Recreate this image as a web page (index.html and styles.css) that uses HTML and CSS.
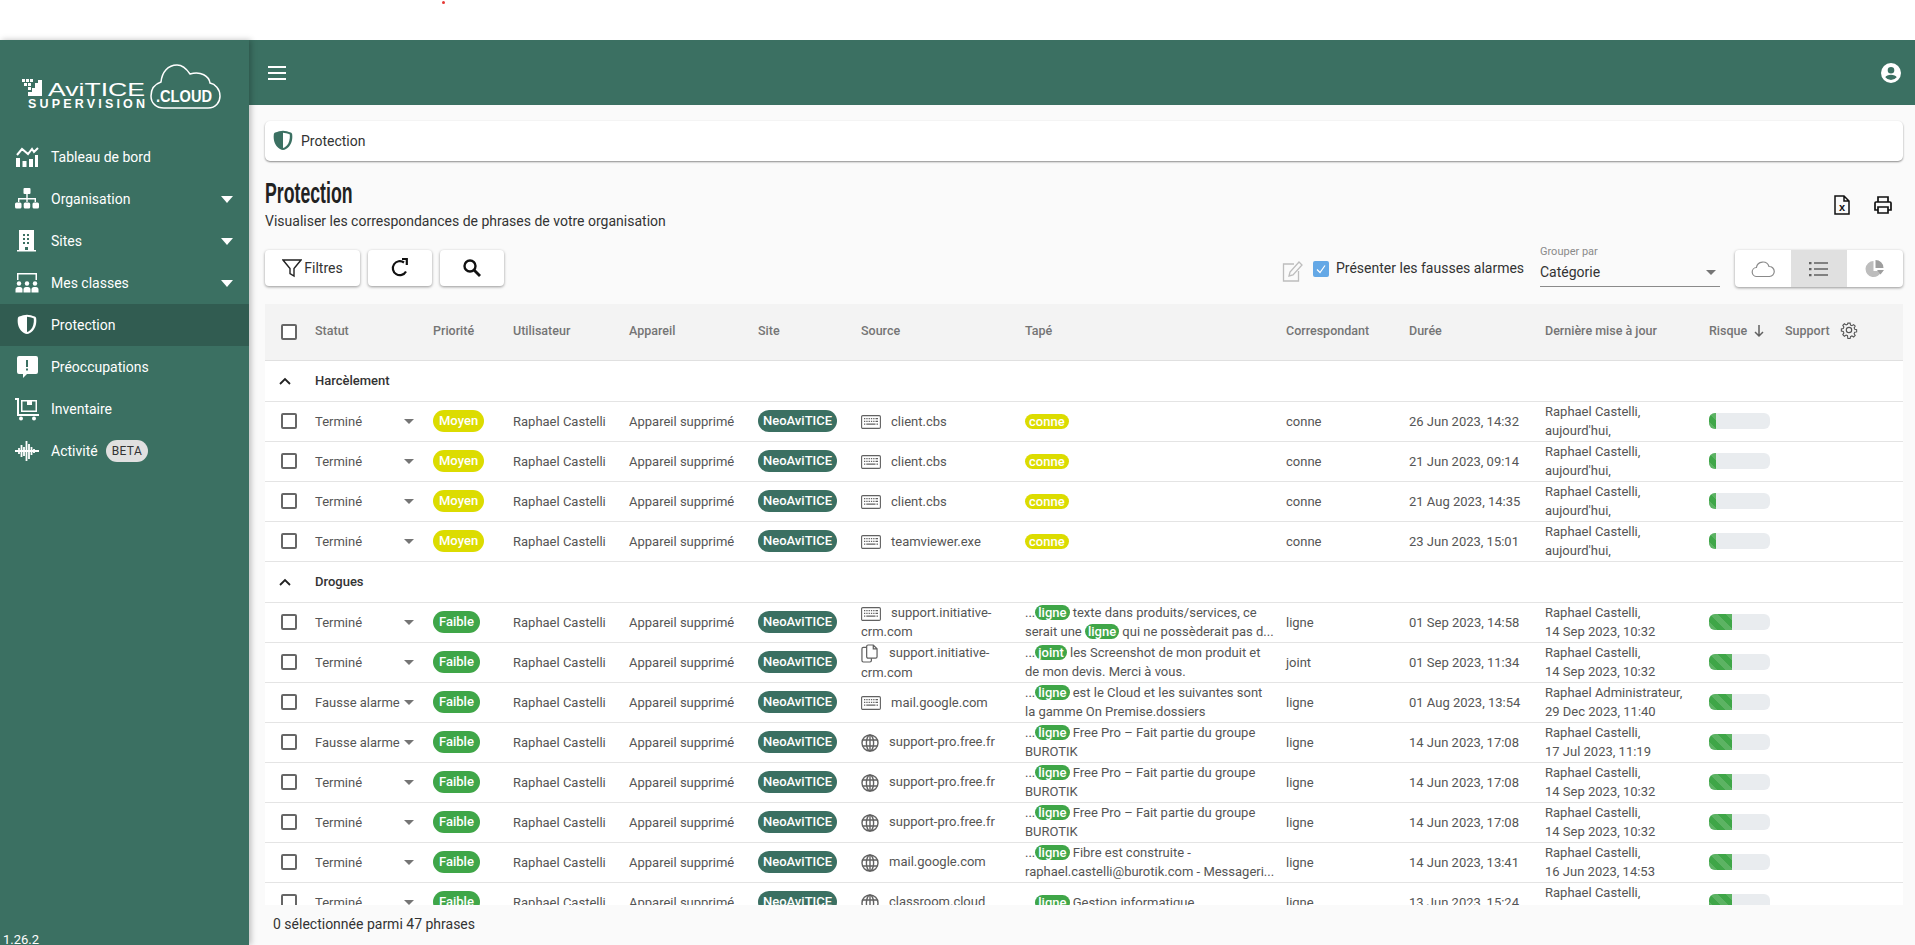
FILE: index.html
```html
<!DOCTYPE html>
<html lang="fr">
<head>
    <meta charset="UTF-8">
    <meta name="viewport" content="width=device-width, initial-scale=1.0">
    <title>Protection</title>
    <link rel="stylesheet" href="styles.css">
</head>
<body>
    <svg class="defs" aria-hidden="true">
        <symbol id="i-shield" viewBox="0 0 24 24"><path d="M12 1C9.5 1 5.200 2.200 2.700 3.100 1.700 3.400 1.100 4.200 1 5.100 0.100 12 2.300 17.100 5 20.200c2 2.300 4.800 3.800 7 3.800s5-1.500 7-3.800c2.700-3.100 4.900-8.200 4-15.100-.1-.9-.7-1.700-1.700-2C18.800 2.200 14.500 1 12 1zm0 2.400c2 0 5.700 1 8.200 1.900.4 5.900-1.100 10.300-3.300 13.100-1.700 2-3.800 3.200-4.900 3.200z" fill-rule="evenodd"/></symbol>
        <symbol id="i-keyboard" viewBox="0 0 20 14"><rect x=".6" y=".6" width="18.800" height="12.800" rx="1.200" fill="none" stroke="currentColor" stroke-width="1.100"/><path d="M3 3h1.300v1.300H3zM5.300 3h1.300v1.300H5.300zM7.600 3h1.300v1.300H7.600zM9.900 3h1.300v1.300H9.900zM12.200 3h1.300v1.300h-1.300zM14.500 3h2.500v1.300h-2.500zM3 5.700h1.300V7H3zM5.300 5.700h1.300V7H5.300zM7.600 5.700h1.300V7H7.600zM9.900 5.700h1.300V7H9.900zM12.200 5.700h1.300V7h-1.300zM14.500 5.700h2.500V7h-2.500zM3 8.400h1.300v1.300H3zM5.300 8.400h9.200v1.300H5.300zM15.500 8.400H17v1.300h-1.500z"/></symbol>
        <symbol id="i-globe" viewBox="0 0 18 18"><g fill="none" stroke="currentColor" stroke-width="1.400"><circle cx="9" cy="9" r="8"/><ellipse cx="9" cy="9" rx="3.600" ry="8"/><path d="M1.500 6h15M1.500 12h15M9 1v16"/></g></symbol>
        <symbol id="i-copy" viewBox="0 0 18 20"><g fill="none" stroke="currentColor" stroke-width="1.300"><path d="M6 3.500H2.500A1.500 1.500 0 0 0 1 5v12.500A1.500 1.500 0 0 0 2.500 19h7a1.500 1.500 0 0 0 1.500-1.500V15"/><path d="M7.500 1H13l4 4v8.500a1.500 1.500 0 0 1-1.500 1.500h-8A1.500 1.500 0 0 1 6 13.500v-11A1.500 1.500 0 0 1 7.500 1zM13 1v4h4"/></g></symbol>
        <symbol id="i-chevron" viewBox="0 0 12 8"><path d="M1 7l5-5 5 5" fill="none" stroke="currentColor" stroke-width="1.800"/></symbol>
    </svg>

    <span class="red-dot"></span>

    <div class="app">
        <aside class="sidebar">
            <div class="logo">
                <svg width="204" height="50" viewBox="0 0 204 50">
                    <path d="M4 16h3v3H4zM8 16h3v3H8zM12 16h3v3h-3zM6 20h3v3H6zM10 20h3v3h-3zM10 24h3v3h-3zM14 25h3v-5h3v-3h4v16H10v-4h4z" fill="#fff"/>
                    <text x="30" y="33" class="logo-name" textLength="97" lengthAdjust="spacingAndGlyphs">AviTICE</text>
                    <text x="10" y="45" class="logo-sub" textLength="117">SUPERVISION</text>
                    <path d="M146 45H190C198 45 202 39 202 33C202 26 197 21 192 20C191 13 183 8 172 11C168 5 164 2 159 2C150 2 144 9 143 19C137 21 133 26 133 33C133 40 138 45 146 45Z" fill="none" stroke="#fff" stroke-width="1.500"/>
                    <text x="138" y="39" class="logo-cloud" textLength="56" lengthAdjust="spacingAndGlyphs">.CLOUD</text>
                </svg>
            </div>
            <nav class="nav">
                <a class="nav-item">
                    <svg class="nav-icon" viewBox="0 0 24 24"><path d="M1 13h4v9H1zM7.500 16h4v6h-4zM14 14h4v8h-4zM20 10h3v12h-3z"/><path d="M2 10l5-6 6 5 4-5 2 3 4-4" fill="none" stroke="#fff" stroke-width="2"/></svg>
                    <span>Tableau de bord</span>
                </a>
                <a class="nav-item">
                    <svg class="nav-icon" viewBox="0 0 24 24"><rect x="8.500" y="1" width="7" height="6" rx="1"/><path d="M11.300 7h1.400v4H21v4h-1.400v-2.600h-6.900V15h-1.400v-2.600H4.400V15H3v-4h8.300z"/><rect x="0" y="15.500" width="6.500" height="6" rx="1.500"/><rect x="8.700" y="15.500" width="6.500" height="6" rx="1.500"/><rect x="17.500" y="15.500" width="6.500" height="6" rx="1.500"/></svg>
                    <span>Organisation</span>
                    <i class="caret"></i>
                </a>
                <a class="nav-item">
                    <svg class="nav-icon" viewBox="0 0 24 24"><path d="M4 1h15v20h2v1.500H2V21h2zm4 4v2h2V5zm4 0v2h2V5zM8 9v2h2V9zm4 0v2h2V9zm-4 4v2h2v-2zm4 0v2h2v-2zm-2 5v3h3v-3z" fill-rule="evenodd"/></svg>
                    <span>Sites</span>
                    <i class="caret"></i>
                </a>
                <a class="nav-item">
                    <svg class="nav-icon" viewBox="0 0 24 24"><path d="M2 2h20v7h-1.500V3.500h-17V9H2z"/><circle cx="4" cy="12.500" r="2.200"/><circle cx="12" cy="12.500" r="2.200"/><circle cx="20" cy="12.500" r="2.200"/><path d="M.5 21.500v-3c0-1.500 1-2.500 2.500-2.500h2c1.500 0 2.500 1 2.500 2.500v3zM8.500 21.500v-3c0-1.500 1-2.500 2.500-2.500h2c1.500 0 2.500 1 2.500 2.500v3zM16.500 21.500v-3c0-1.500 1-2.500 2.500-2.500h2c1.500 0 2.500 1 2.500 2.500v3z"/></svg>
                    <span>Mes classes</span>
                    <i class="caret"></i>
                </a>
                <a class="nav-item active">
                    <svg class="nav-icon nav-shield"><use href="#i-shield"/></svg>
                    <span>Protection</span>
                </a>
                <a class="nav-item">
                    <svg class="nav-icon" viewBox="0 0 24 24"><path d="M4 1h17a2 2 0 0 1 2 2v14a2 2 0 0 1-2 2h-9l-4 4v-4H4a2 2 0 0 1-2-2V3a2 2 0 0 1 2-2zm7 4v7h2V5zm0 8.500v2h2v-2z" fill-rule="evenodd"/></svg>
                    <span>Préoccupations</span>
                </a>
                <a class="nav-item">
                    <svg class="nav-icon" viewBox="0 0 24 24"><path d="M0 1h4v16h20v2H2V3H0z"/><path d="M6 3h16v12H6zm1.500 1.500v9h13v-9H17v3.500h-5V4.500z" fill-rule="evenodd"/><circle cx="6" cy="21.500" r="2"/><circle cx="19" cy="21.500" r="2"/></svg>
                    <span>Inventaire</span>
                </a>
                <a class="nav-item">
                    <svg class="nav-icon" viewBox="0 0 24 24"><path d="M0 12h24M4 9v6M6.500 6v12M9 8v9M11.500 2v20M14 5v15M16.500 8v8M19 10v4" fill="none" stroke="#fff" stroke-width="1.800"/></svg>
                    <span>Activité</span>
                    <b class="beta">BETA</b>
                </a>
            </nav>
            <div class="version">1.26.2</div>
        </aside>

        <main class="main">
            <header class="topbar">
                <div class="burger"><span></span><span></span><span></span></div>
                <svg class="user-icon" viewBox="0 0 20 20"><path d="M10 0a10 10 0 1 0 0 20 10 10 0 0 0 0-20zm0 4a3.300 3.300 0 1 1 0 6.600A3.300 3.300 0 0 1 10 4zm0 7.800c2.500 0 5.300 1 5.700 2.500a7.300 7.300 0 0 1-11.400 0c.4-1.500 3.200-2.500 5.700-2.500z" fill="#fff" fill-rule="evenodd"/></svg>
            </header>

            <div class="content">
                <div class="breadcrumb">
                    <svg class="crumb-icon"><use href="#i-shield"/></svg>
                    <span>Protection</span>
                </div>

                <div class="page-head">
                    <div>
                        <h1>Protection</h1>
                        <p>Visualiser les correspondances de phrases de votre organisation</p>
                    </div>
                    <div class="page-actions">
                        <svg viewBox="0 0 16 20" width="16" height="20"><path d="M1 1h9l5 5v13H1zM10 1v5h5" fill="none" stroke="#111" stroke-width="1.500"/><text x="8" y="16" class="xls-x">x</text></svg>
                        <svg viewBox="0 0 20 20" width="20" height="20"><path d="M5 7V2h10v5M5 15H2V8a1 1 0 0 1 1-1h14a1 1 0 0 1 1 1v7h-3M5 12h10v6H5z" fill="none" stroke="#111" stroke-width="1.700"/></svg>
                    </div>
                </div>

                <div class="toolbar">
                    <div class="tool-left">
                        <button class="btn">
                            <svg viewBox="0 0 20 20" width="20" height="20"><path d="M1 2h18l-7 8.500V18l-4-2.500v-5z" fill="none" stroke="#222" stroke-width="1.400"/></svg>
                            Filtres
                        </button>
                        <button class="btn btn-icon">
                            <svg viewBox="0 0 20 20" width="20" height="20"><path d="M16 13.500A7 7 0 1 1 14 4.500" fill="none" stroke="#111" stroke-width="2.200"/><path d="M12 1h4.800v6" fill="none" stroke="#111" stroke-width="2.200"/></svg>
                        </button>
                        <button class="btn btn-icon">
                            <svg viewBox="0 0 20 20" width="20" height="20"><circle cx="8" cy="8" r="5.500" fill="none" stroke="#111" stroke-width="2.400"/><path d="M12 12l6 6" stroke="#111" stroke-width="2.800"/></svg>
                        </button>
                    </div>
                    <div class="tool-right">
                        <svg class="edit-icon" viewBox="0 0 22 22" width="22" height="22"><path d="M12 4H1.500v17h15V11" fill="none" stroke="#bdbdbd" stroke-width="1.300"/><path d="M7 16l1-4 9-10 3 3-9 10z" fill="none" stroke="#bdbdbd" stroke-width="1.300"/></svg>
                        <span class="check-on">
                            <svg viewBox="0 0 16 16" width="16" height="16"><path d="M4 8.500l3 3 5-7" fill="none" stroke="#fff" stroke-width="1.200"/></svg>
                        </span>
                        <span class="check-label">Présenter les fausses alarmes</span>
                        <div class="group-select">
                            <label>Grouper par</label>
                            <div class="group-value"><span>Catégorie</span><i class="tri"></i></div>
                        </div>
                        <div class="view-toggle">
                            <span class="view">
                                <svg viewBox="0 0 24 18" width="24" height="18"><path d="M6 16.500a4.500 4.500 0 0 1-.6-9A6.500 6.500 0 0 1 18 6.500a5 5 0 0 1 .5 10z" fill="none" stroke="#8a8a8a" stroke-width="1.200"/></svg>
                            </span>
                            <span class="view selected">
                                <svg viewBox="0 0 20 16" width="20" height="16"><path d="M0 1h2.500v2.200H0zM0 7h2.500v2.200H0zM0 13h2.500v2.200H0z" fill="#616161"/><path d="M5 2.100h14M5 8.100h14M5 14.100h14" stroke="#616161" stroke-width="1.500"/></svg>
                            </span>
                            <span class="view">
                                <svg viewBox="0 0 20 20" width="20" height="20"><path d="M8.500 2a8 8 0 1 0 7.800 10H8.500z" fill="#bdbdbd"/><path d="M10.500 1a8 8 0 0 1 8 8h-8zM12 11h7l-3.500 4.500z" fill="#9e9e9e"/></svg>
                            </span>
                        </div>
                    </div>
                </div>

                <table class="phrases">
                    <colgroup>
                        <col class="c-check"><col class="c-statut"><col class="c-prio"><col class="c-user"><col class="c-device"><col class="c-site"><col class="c-source"><col class="c-tape"><col class="c-corr"><col class="c-duree"><col class="c-maj"><col class="c-risk"><col class="c-support">
                    </colgroup>
                    <thead>
                        <tr>
                            <th><span class="check"></span></th>
                            <th>Statut</th>
                            <th>Priorité</th>
                            <th>Utilisateur</th>
                            <th>Appareil</th>
                            <th>Site</th>
                            <th>Source</th>
                            <th>Tapé</th>
                            <th>Correspondant</th>
                            <th>Durée</th>
                            <th>Dernière mise à jour</th>
                            <th>Risque <svg class="sort" viewBox="0 0 12 14" width="12" height="14"><path d="M6 1v11M2 8l4 4 4-4" fill="none" stroke="#616161" stroke-width="1.500"/></svg></th>
                            <th>Support <svg class="gear" viewBox="0 0 20 20" width="18" height="18"><path d="M8.500 1h3l.5 2.500 1.800.8 2.200-1.400 2.100 2.100-1.400 2.200.8 1.800 2.500.5v3l-2.500.5-.8 1.800 1.400 2.200-2.100 2.100-2.200-1.400-1.800.8-.5 2.500h-3L8 17.500l-1.800-.8L4 18.100 1.900 16l1.400-2.200-.8-1.800L0 11.500v-3l2.500-.5.8-1.800L1.900 4 4 1.900l2.200 1.400L8 2.500z" transform="translate(1.500 1.500) scale(.85)" fill="none" stroke="#555" stroke-width="1.400"/><circle cx="10" cy="10" r="3" fill="none" stroke="#555" stroke-width="1.300"/></svg></th>
                        </tr>
                    </thead>
                    <tbody>
                        <tr class="group"><td><svg class="chev"><use href="#i-chevron"/></svg></td><td colspan="12">Harcèlement</td></tr>
                        <tr>
                            <td><span class="check"></span></td>
                            <td><div class="status"><span>Terminé</span><i class="tri"></i></div></td>
                            <td><span class="chip moyen">Moyen</span></td>
                            <td>Raphael Castelli</td>
                            <td>Appareil supprimé</td>
                            <td><span class="chip site">NeoAviTICE</span></td>
                            <td><svg class="src kb"><use href="#i-keyboard"/></svg>client.cbs</td>
                            <td><span class="hit yellow">conne</span></td>
                            <td>conne</td>
                            <td>26 Jun 2023, 14:32</td>
                            <td>Raphael Castelli,<br>aujourd'hui,</td>
                            <td><div class="risk"><div class="risk-fill low"></div></div></td>
                            <td></td>
                        </tr>
                        <tr>
                            <td><span class="check"></span></td>
                            <td><div class="status"><span>Terminé</span><i class="tri"></i></div></td>
                            <td><span class="chip moyen">Moyen</span></td>
                            <td>Raphael Castelli</td>
                            <td>Appareil supprimé</td>
                            <td><span class="chip site">NeoAviTICE</span></td>
                            <td><svg class="src kb"><use href="#i-keyboard"/></svg>client.cbs</td>
                            <td><span class="hit yellow">conne</span></td>
                            <td>conne</td>
                            <td>21 Jun 2023, 09:14</td>
                            <td>Raphael Castelli,<br>aujourd'hui,</td>
                            <td><div class="risk"><div class="risk-fill low"></div></div></td>
                            <td></td>
                        </tr>
                        <tr>
                            <td><span class="check"></span></td>
                            <td><div class="status"><span>Terminé</span><i class="tri"></i></div></td>
                            <td><span class="chip moyen">Moyen</span></td>
                            <td>Raphael Castelli</td>
                            <td>Appareil supprimé</td>
                            <td><span class="chip site">NeoAviTICE</span></td>
                            <td><svg class="src kb"><use href="#i-keyboard"/></svg>client.cbs</td>
                            <td><span class="hit yellow">conne</span></td>
                            <td>conne</td>
                            <td>21 Aug 2023, 14:35</td>
                            <td>Raphael Castelli,<br>aujourd'hui,</td>
                            <td><div class="risk"><div class="risk-fill low"></div></div></td>
                            <td></td>
                        </tr>
                        <tr>
                            <td><span class="check"></span></td>
                            <td><div class="status"><span>Terminé</span><i class="tri"></i></div></td>
                            <td><span class="chip moyen">Moyen</span></td>
                            <td>Raphael Castelli</td>
                            <td>Appareil supprimé</td>
                            <td><span class="chip site">NeoAviTICE</span></td>
                            <td><svg class="src kb"><use href="#i-keyboard"/></svg>teamviewer.exe</td>
                            <td><span class="hit yellow">conne</span></td>
                            <td>conne</td>
                            <td>23 Jun 2023, 15:01</td>
                            <td>Raphael Castelli,<br>aujourd'hui,</td>
                            <td><div class="risk"><div class="risk-fill low"></div></div></td>
                            <td></td>
                        </tr>

                        <tr class="group"><td><svg class="chev"><use href="#i-chevron"/></svg></td><td colspan="12">Drogues</td></tr>
                        <tr>
                            <td><span class="check"></span></td>
                            <td><div class="status"><span>Terminé</span><i class="tri"></i></div></td>
                            <td><span class="chip faible">Faible</span></td>
                            <td>Raphael Castelli</td>
                            <td>Appareil supprimé</td>
                            <td><span class="chip site">NeoAviTICE</span></td>
                            <td><svg class="src kb"><use href="#i-keyboard"/></svg>support.initiative-crm.com</td>
                            <td>...<span class="hit">ligne</span> texte dans produits/services, ce serait une <span class="hit">ligne</span> qui ne possèderait pas d...</td>
                            <td>ligne</td>
                            <td>01 Sep 2023, 14:58</td>
                            <td>Raphael Castelli,<br>14 Sep 2023, 10:32</td>
                            <td><div class="risk"><div class="risk-fill"></div></div></td>
                            <td></td>
                        </tr>
                        <tr>
                            <td><span class="check"></span></td>
                            <td><div class="status"><span>Terminé</span><i class="tri"></i></div></td>
                            <td><span class="chip faible">Faible</span></td>
                            <td>Raphael Castelli</td>
                            <td>Appareil supprimé</td>
                            <td><span class="chip site">NeoAviTICE</span></td>
                            <td><svg class="src cp"><use href="#i-copy"/></svg>support.initiative-crm.com</td>
                            <td>...<span class="hit">joint</span> les Screenshot de mon produit et de mon devis. Merci à vous.</td>
                            <td>joint</td>
                            <td>01 Sep 2023, 11:34</td>
                            <td>Raphael Castelli,<br>14 Sep 2023, 10:32</td>
                            <td><div class="risk"><div class="risk-fill"></div></div></td>
                            <td></td>
                        </tr>
                        <tr>
                            <td><span class="check"></span></td>
                            <td><div class="status"><span>Fausse alarme</span><i class="tri"></i></div></td>
                            <td><span class="chip faible">Faible</span></td>
                            <td>Raphael Castelli</td>
                            <td>Appareil supprimé</td>
                            <td><span class="chip site">NeoAviTICE</span></td>
                            <td><svg class="src kb"><use href="#i-keyboard"/></svg>mail.google.com</td>
                            <td>...<span class="hit">ligne</span> est le Cloud et les suivantes sont la gamme On Premise.dossiers</td>
                            <td>ligne</td>
                            <td>01 Aug 2023, 13:54</td>
                            <td>Raphael Administrateur,<br>29 Dec 2023, 11:40</td>
                            <td><div class="risk"><div class="risk-fill"></div></div></td>
                            <td></td>
                        </tr>
                        <tr>
                            <td><span class="check"></span></td>
                            <td><div class="status"><span>Fausse alarme</span><i class="tri"></i></div></td>
                            <td><span class="chip faible">Faible</span></td>
                            <td>Raphael Castelli</td>
                            <td>Appareil supprimé</td>
                            <td><span class="chip site">NeoAviTICE</span></td>
                            <td><svg class="src web"><use href="#i-globe"/></svg>support-pro.free.fr</td>
                            <td>...<span class="hit">ligne</span> Free Pro – Fait partie du groupe BUROTIK</td>
                            <td>ligne</td>
                            <td>14 Jun 2023, 17:08</td>
                            <td>Raphael Castelli,<br>17 Jul 2023, 11:19</td>
                            <td><div class="risk"><div class="risk-fill"></div></div></td>
                            <td></td>
                        </tr>
                        <tr>
                            <td><span class="check"></span></td>
                            <td><div class="status"><span>Terminé</span><i class="tri"></i></div></td>
                            <td><span class="chip faible">Faible</span></td>
                            <td>Raphael Castelli</td>
                            <td>Appareil supprimé</td>
                            <td><span class="chip site">NeoAviTICE</span></td>
                            <td><svg class="src web"><use href="#i-globe"/></svg>support-pro.free.fr</td>
                            <td>...<span class="hit">ligne</span> Free Pro – Fait partie du groupe BUROTIK</td>
                            <td>ligne</td>
                            <td>14 Jun 2023, 17:08</td>
                            <td>Raphael Castelli,<br>14 Sep 2023, 10:32</td>
                            <td><div class="risk"><div class="risk-fill"></div></div></td>
                            <td></td>
                        </tr>
                        <tr>
                            <td><span class="check"></span></td>
                            <td><div class="status"><span>Terminé</span><i class="tri"></i></div></td>
                            <td><span class="chip faible">Faible</span></td>
                            <td>Raphael Castelli</td>
                            <td>Appareil supprimé</td>
                            <td><span class="chip site">NeoAviTICE</span></td>
                            <td><svg class="src web"><use href="#i-globe"/></svg>support-pro.free.fr</td>
                            <td>...<span class="hit">ligne</span> Free Pro – Fait partie du groupe BUROTIK</td>
                            <td>ligne</td>
                            <td>14 Jun 2023, 17:08</td>
                            <td>Raphael Castelli,<br>14 Sep 2023, 10:32</td>
                            <td><div class="risk"><div class="risk-fill"></div></div></td>
                            <td></td>
                        </tr>
                        <tr>
                            <td><span class="check"></span></td>
                            <td><div class="status"><span>Terminé</span><i class="tri"></i></div></td>
                            <td><span class="chip faible">Faible</span></td>
                            <td>Raphael Castelli</td>
                            <td>Appareil supprimé</td>
                            <td><span class="chip site">NeoAviTICE</span></td>
                            <td><svg class="src web"><use href="#i-globe"/></svg>mail.google.com</td>
                            <td class="nowrap">...<span class="hit">ligne</span> Fibre est construite -<br>raphael.castelli@burotik.com - Messageri...</td>
                            <td>ligne</td>
                            <td>14 Jun 2023, 13:41</td>
                            <td>Raphael Castelli,<br>16 Jun 2023, 14:53</td>
                            <td><div class="risk"><div class="risk-fill"></div></div></td>
                            <td></td>
                        </tr>
                        <tr>
                            <td><span class="check"></span></td>
                            <td><div class="status"><span>Terminé</span><i class="tri"></i></div></td>
                            <td><span class="chip faible">Faible</span></td>
                            <td>Raphael Castelli</td>
                            <td>Appareil supprimé</td>
                            <td><span class="chip site">NeoAviTICE</span></td>
                            <td><svg class="src web"><use href="#i-globe"/></svg>classroom.cloud</td>
                            <td>...<span class="hit">ligne</span> Gestion informatique</td>
                            <td>ligne</td>
                            <td>13 Jun 2023, 15:24</td>
                            <td>Raphael Castelli,<br>14 Sep 2023, 10:32</td>
                            <td><div class="risk"><div class="risk-fill"></div></div></td>
                            <td></td>
                        </tr>
                    </tbody>
                </table>
            </div>

            <footer class="footer">0 sélectionnée parmi 47 phrases</footer>
        </main>
    </div>
</body>
</html>
```

FILE: styles.css
```css
* {
    box-sizing: border-box;
}

html, body {
    height: 100%;
}

body {
    margin: 0;
    padding-top: 40px;
    overflow: hidden;
    background-color: #fff;
    font-family: Roboto, "Liberation Sans", sans-serif;
    font-size: 13px;
    color: #424242;
}

.defs {
    display: none;
}

.red-dot {
    position: absolute;
    left: 442px;
    top: 1px;
    width: 3px;
    height: 3px;
    border-radius: 50%;
    background-color: #e53935;
}

.app {
    display: flex;
    height: 905px;
}

/* sidebar */
.sidebar {
    display: flex;
    flex-direction: column;
    flex: 0 0 249px;
    overflow: hidden;
    background-color: #3b7062;
    color: #fff;
    box-shadow: 2px 0 6px rgba(0, 0, 0, 0.25);
    z-index: 1;
}

.logo {
    height: 96px;
    padding: 23px 0 0 18px;
}

.logo-name {
    font-family: "Liberation Sans", sans-serif;
    font-size: 19px;
    fill: #fff;
}

.logo-sub {
    font-family: "Liberation Sans", sans-serif;
    font-size: 12.500px;
    font-weight: bold;
    fill: #fff;
}

.logo-cloud {
    font-family: "Liberation Sans", sans-serif;
    font-size: 16px;
    font-weight: bold;
    fill: #fff;
}

.nav-item {
    display: flex;
    align-items: center;
    height: 42px;
    padding-left: 15px;
    padding-right: 15px;
    font-size: 14px;
    color: #fff;
    cursor: pointer;
}

.nav-item.active {
    background-color: #315c51;
}

.nav-icon {
    flex: 0 0 24px;
    width: 24px;
    height: 24px;
    margin-right: 12px;
    fill: #fff;
}

.nav-shield {
    flex-basis: 20px;
    width: 20px;
    height: 20px;
    margin: -2px 14px 0 2px;
}

.caret {
    width: 0;
    height: 0;
    margin-left: auto;
    margin-right: 1px;
    border-left: 6px solid transparent;
    border-right: 6px solid transparent;
    border-top: 7px solid #fff;
}

.beta {
    margin-left: 8px;
    padding: 0 6px;
    border-radius: 11px;
    background-color: #e0e0e0;
    color: #333;
    font-size: 12px;
    font-weight: 400;
    line-height: 22px;
    letter-spacing: 0.4px;
}

.version {
    margin-top: auto;
    margin-bottom: -3px;
    padding-left: 3px;
    line-height: 16px;
}

/* main */
.main {
    display: flex;
    flex-direction: column;
    flex: 1;
    min-width: 0;
    background-color: #fafafa;
}

.topbar {
    display: flex;
    align-items: center;
    justify-content: space-between;
    flex: 0 0 65px;
    padding: 0 14px 0 19px;
    background-color: #3b7062;
}

.burger span {
    display: block;
    width: 18px;
    height: 2px;
    margin: 4px 0;
    background-color: #fff;
}

.user-icon {
    width: 20px;
    height: 20px;
}

.content {
    flex: 1;
    min-height: 0;
    overflow: hidden;
    padding: 16px 12px 0 16px;
}

.breadcrumb {
    display: flex;
    align-items: center;
    height: 40px;
    padding-left: 8px;
    border-radius: 5px;
    background-color: #fff;
    box-shadow: 0 1px 2px rgba(0, 0, 0, 0.45);
    font-size: 14px;
    color: #333;
}

.crumb-icon {
    width: 20px;
    height: 20px;
    margin-right: 8px;
    margin-top: -2px;
    fill: #3b7062;
}

.page-head {
    display: flex;
    justify-content: space-between;
    height: 89px;
    padding-top: 17px;
}

.page-head h1 {
    margin: 0;
    font-family: "Liberation Sans", sans-serif;
    font-size: 30px;
    font-weight: bold;
    line-height: 29px;
    color: #222;
    transform: scaleX(0.59);
    transform-origin: left center;
}

.page-head p {
    margin: 6px 0 0;
    font-size: 14px;
    line-height: 16px;
    color: #333;
}

.page-actions {
    display: flex;
    gap: 23px;
    align-items: flex-start;
    padding: 17px 10px 0 0;
}

.xls-x {
    font-family: "Liberation Sans", sans-serif;
    font-size: 11px;
    font-weight: bold;
    text-anchor: middle;
    fill: #111;
}

.toolbar {
    display: flex;
    justify-content: space-between;
    height: 37px;
    margin-bottom: 17px;
}

.tool-left {
    display: flex;
    gap: 8px;
}

.btn {
    display: flex;
    align-items: center;
    justify-content: center;
    gap: 2px;
    width: 95px;
    height: 36px;
    padding: 0;
    border: none;
    border-radius: 4px;
    background-color: #fff;
    box-shadow: 0 1px 3px rgba(0, 0, 0, 0.4);
    font-family: inherit;
    font-size: 14px;
    color: #333;
}

.btn-icon {
    width: 64px;
}

.tool-right {
    display: flex;
    align-items: center;
}

.edit-icon {
    margin-right: 9px;
    margin-top: 4px;
}

.check-on {
    width: 16px;
    height: 16px;
    margin-right: 7px;
    margin-top: 1px;
    border-radius: 2px;
    background-color: #64a8e6;
}

.check-on svg {
    display: block;
}

.check-label {
    width: 204px;
    margin-bottom: 1px;
    font-size: 14px;
    color: #333;
}

.group-select {
    width: 180px;
    margin-right: 15px;
    align-self: flex-end;
}

.group-select label {
    display: block;
    font-size: 11px;
    line-height: 13px;
    color: #8a8a8a;
}

.group-value {
    display: flex;
    align-items: center;
    justify-content: space-between;
    height: 29px;
    padding-right: 4px;
    border-bottom: 1px solid #8a8a8a;
    font-size: 14px;
    color: #333;
}

.tri {
    flex: none;
    width: 0;
    height: 0;
    border-left: 5px solid transparent;
    border-right: 5px solid transparent;
    border-top: 5px solid #757575;
}

.view-toggle {
    display: flex;
    height: 37px;
    border-radius: 4px;
    background-color: #fff;
    box-shadow: 0 1px 3px rgba(0, 0, 0, 0.4);
    overflow: hidden;
}

.view {
    display: flex;
    align-items: center;
    justify-content: center;
    width: 56px;
}

.view.selected {
    background-color: #e0e0e0;
}

/* table */
.phrases {
    width: 100%;
    table-layout: fixed;
    border-collapse: collapse;
    background-color: #fff;
}

.c-check { width: 50px; }
.c-statut { width: 118px; }
.c-prio { width: 80px; }
.c-user { width: 116px; }
.c-device { width: 129px; }
.c-site { width: 103px; }
.c-source { width: 164px; }
.c-tape { width: 261px; }
.c-corr { width: 123px; }
.c-duree { width: 136px; }
.c-maj { width: 164px; }
.c-risk { width: 76px; }
.c-support { width: 118px; }

.phrases th {
    height: 56px;
    padding: 0 0 3px;
    background-color: #f3f3f3;
    border-bottom: 1px solid #e0e0e0;
    font-size: 12.500px;
    font-weight: 500;
    text-align: left;
    color: #757575;
    white-space: nowrap;
}

.phrases td {
    height: 40px;
    padding: 0 12px 0 0;
    border-bottom: 1px solid #e4e4e4;
    line-height: 19px;
    color: #555;
}

.phrases th:first-child,
.phrases td:first-child {
    padding: 0 0 0 16px;
}

.phrases .group td {
    height: 41px;
    font-weight: 500;
    color: #333;
}

.phrases .group td:first-child {
    padding-left: 14px;
}

.phrases .nowrap {
    white-space: nowrap;
}

.chev {
    display: block;
    width: 12px;
    height: 8px;
    color: #222;
}

.check {
    display: block;
    width: 16px;
    height: 16px;
    border: 2px solid #666;
    border-radius: 2px;
    background-color: #fff;
}

.status {
    display: flex;
    align-items: center;
    justify-content: space-between;
    width: 99px;
}

.chip {
    display: inline-block;
    padding: 0 6px;
    border-radius: 11px;
    font-weight: 500;
    line-height: 22px;
    color: #fff;
}

.moyen {
    background-color: #dcdc00;
}

.faible {
    background-color: #3fa648;
}

.site {
    padding: 0 5px;
    background-color: #3b7062;
}

.src {
    vertical-align: middle;
    margin-right: 10px;
    color: #616161;
    fill: #616161;
}

.kb {
    width: 20px;
    height: 14px;
}

.web {
    width: 18px;
    height: 18px;
    margin-right: 10px;
}

.cp {
    width: 17px;
    height: 19px;
    margin-right: 11px;
}

.hit {
    display: inline-block;
    padding: 0 3px;
    border-radius: 8px;
    background-color: #3fa648;
    font-weight: 500;
    line-height: 15px;
    color: #fff;
}

.hit.yellow {
    padding: 0 4px;
    background-color: #dcdc00;
}

.sort {
    margin-left: 3px;
    vertical-align: -3px;
}

.gear {
    margin-left: 7px;
    vertical-align: -4px;
}

.risk {
    width: 61px;
    height: 16px;
    overflow: hidden;
    border-radius: 6px;
    background-color: #e9ecef;
}

.risk-fill {
    width: 23px;
    height: 100%;
    background-color: #3fa648;
    background-image: linear-gradient(45deg, rgba(255, 255, 255, 0.15) 25%, transparent 25%, transparent 50%, rgba(255, 255, 255, 0.15) 50%, rgba(255, 255, 255, 0.15) 75%, transparent 75%);
    background-size: 16px 16px;
}

.risk-fill.low {
    width: 7px;
}

.footer {
    flex: 0 0 40px;
    padding: 11px 0 0 24px;
    background-color: #fafafa;
    font-size: 14px;
    color: #333;
}
```
